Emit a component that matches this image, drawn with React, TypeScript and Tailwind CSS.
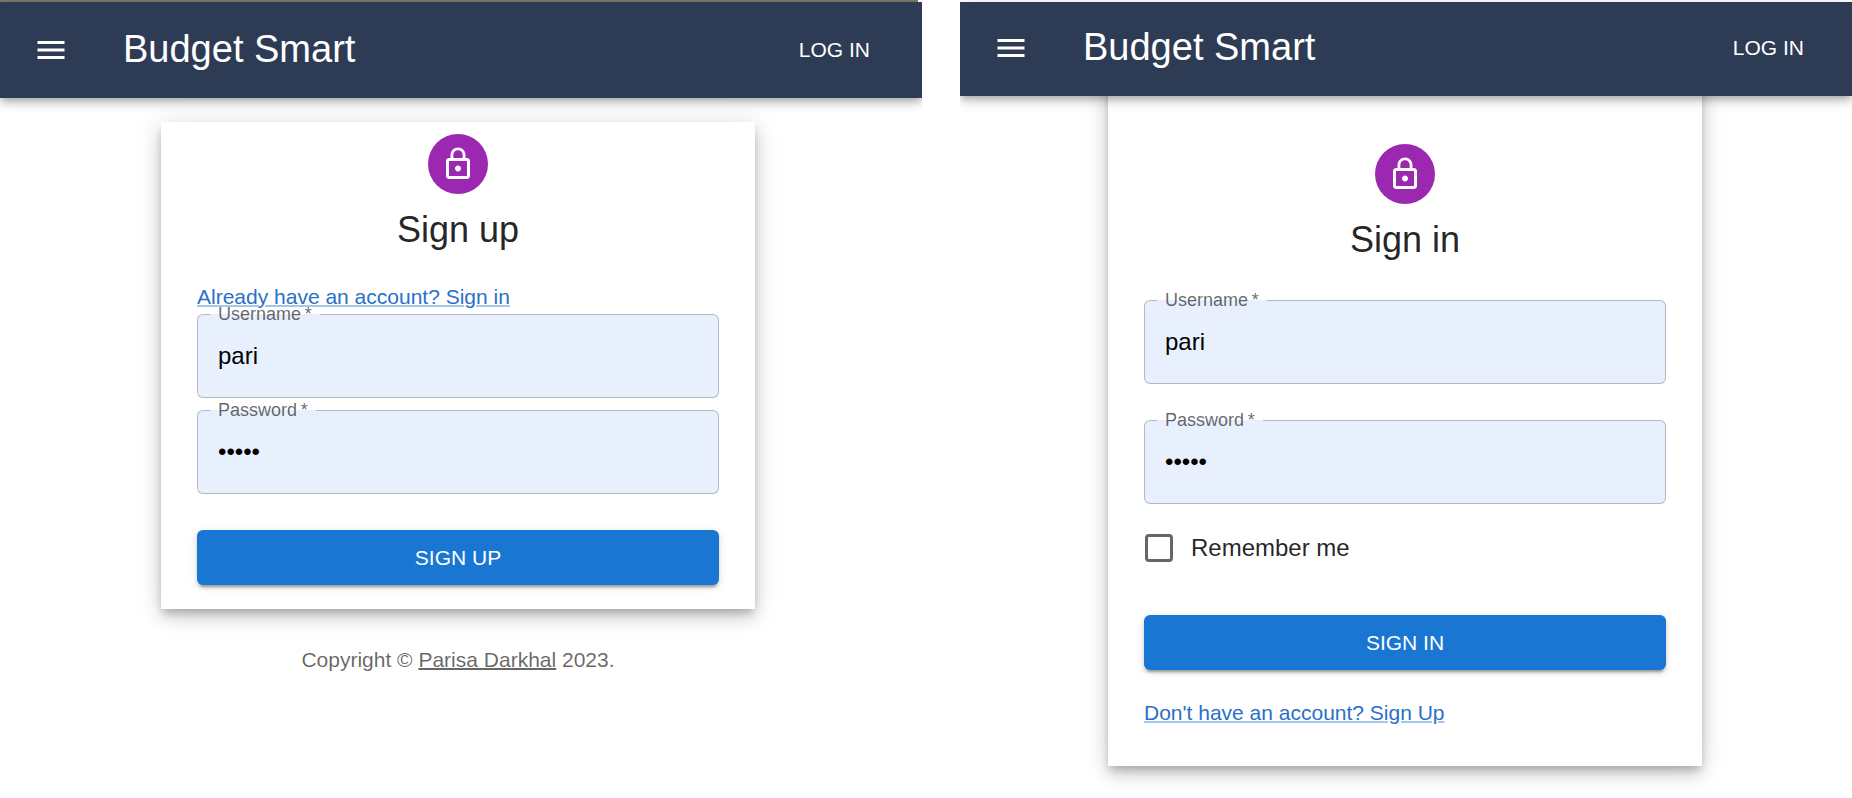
import React, { useId } from "react";

const cardShadow =
  "shadow-[0_5px_8px_-2px_rgba(0,0,0,0.2),0_9px_15px_0_rgba(0,0,0,0.14),0_2px_27px_0_rgba(0,0,0,0.12)]";

function MenuIcon() {
  return (
    <svg viewBox="0 0 24 24" className="size-9 fill-current" aria-hidden="true">
      <path d="M3 18h18v-2H3v2zm0-5h18v-2H3v2zm0-7v2h18V6H3z" />
    </svg>
  );
}

function LockBadge() {
  return (
    <div className="flex size-[60px] items-center justify-center rounded-full bg-[#9c27b0] text-white">
      <svg viewBox="0 0 24 24" className="size-9 fill-current" aria-hidden="true">
        <path d="M12 17c1.1 0 2-.9 2-2s-.9-2-2-2-2 .9-2 2 .9 2 2 2zm6-9h-1V6c0-2.76-2.24-5-5-5S7 3.24 7 6v2H6c-1.1 0-2 .9-2 2v10c0 1.1.9 2 2 2h12c1.1 0 2-.9 2-2V10c0-1.1-.9-2-2-2zM8.9 6c0-1.71 1.39-3.1 3.1-3.1s3.1 1.39 3.1 3.1v2H8.9V6zM18 20H6V10h12v10z" />
      </svg>
    </div>
  );
}

function AppHeader({ className }: { className: string }) {
  return (
    <header
      className={`relative z-10 flex items-center bg-[#2e3b55] pl-[33px] text-white shadow-[0_3px_6px_-2px_rgba(0,0,0,0.2),0_6px_8px_0_rgba(0,0,0,0.14),0_2px_15px_0_rgba(0,0,0,0.12)] ${className}`}
    >
      <button type="button" aria-label="Menu">
        <MenuIcon />
      </button>
      <div className="ml-[54px] grow pb-0.5 text-[38px] leading-12">Budget Smart</div>
      <button type="button" className="text-[21px] leading-9">
        LOG IN
      </button>
    </header>
  );
}

function Field({ label, type, value }: { label: string; type: string; value: string }) {
  const id = useId();
  return (
    <fieldset className="relative min-w-0 rounded-md border border-black/23 bg-[#e8f0fe]">
      <legend className="ml-3 px-2 text-lg leading-6 text-black/60">
        <label htmlFor={id} className="block">
          {label}&thinsp;*
        </label>
      </legend>
      <input
        id={id}
        type={type}
        defaultValue={value}
        className="mb-[11px] block h-[60px] w-full bg-transparent px-5 text-2xl text-black outline-none"
      />
    </fieldset>
  );
}

function SubmitButton({ children }: { children: React.ReactNode }) {
  return (
    <button
      type="submit"
      className="mt-9 block w-full rounded-md bg-[#1976d2] py-2 text-[21px] leading-[39px] text-white shadow-[0_5px_2px_-3px_rgba(0,0,0,0.2),0_3px_3px_0_rgba(0,0,0,0.14),0_2px_8px_0_rgba(0,0,0,0.12)]"
    >
      {children}
    </button>
  );
}

function TextLink({ children }: { children: React.ReactNode }) {
  return (
    <a
      href="#"
      className="text-[21px] leading-[30px] text-[#2a70c8] underline decoration-[#1976d2]/40 decoration-2"
    >
      {children}
    </a>
  );
}

function stay(e: React.FormEvent) {
  e.preventDefault();
}

function SignUp() {
  return (
    <section className="overflow-hidden">
      <div className="mr-1 h-0.5 bg-[#7c7c66]" />
      <AppHeader className="h-24 pr-[52px]" />
      <main className="pr-1.5 pt-6">
        <div
          className={`mx-auto flex max-w-[594px] flex-col items-center bg-white px-9 pb-6 pt-3 ${cardShadow}`}
        >
          <LockBadge />
          <h1 className="mt-3 text-4xl leading-12 text-black/87">Sign up</h1>
          <form onSubmit={stay} className="mt-7 w-full">
            <div className="-mb-2.5 flex">
              <TextLink>Already have an account? Sign in</TextLink>
            </div>
            <Field label="Username" type="text" value="pari" />
            <Field label="Password" type="password" value="12345" />
            <SubmitButton>SIGN UP</SubmitButton>
          </form>
        </div>
        <p className="mt-9 text-center text-[21px] leading-[30px] text-black/60">
          Copyright ©{" "}
          <a href="#" className="underline decoration-2">
            Parisa Darkhal
          </a>{" "}
          2023.
        </p>
      </main>
    </section>
  );
}

function SignIn() {
  return (
    <section className="overflow-hidden pt-0.5">
      <AppHeader className="h-[94px] pb-0.5 pr-12" />
      <main className="pr-0.5">
        <div
          className={`mx-auto -mt-6 flex max-w-[594px] flex-col items-center bg-white px-9 pb-[38px] pt-[72px] ${cardShadow}`}
        >
          <LockBadge />
          <h1 className="mt-3 text-4xl leading-12 text-black/87">Sign in</h1>
          <form onSubmit={stay} className="mt-6 w-full">
            <div className="flex flex-col gap-6">
              <Field label="Username" type="text" value="pari" />
              <Field label="Password" type="password" value="12345" />
            </div>
            <label className="mt-3 flex h-[63px] items-center gap-[18px] text-2xl text-black/87">
              <input
                type="checkbox"
                className="ml-px size-7 appearance-none rounded-sm border-3 border-black/60 bg-white checked:bg-[#1976d2]"
              />
              Remember me
            </label>
            <SubmitButton>SIGN IN</SubmitButton>
            <div className="mt-7 flex">
              <TextLink>Don't have an account? Sign Up</TextLink>
            </div>
          </form>
        </div>
      </main>
    </section>
  );
}

export default function App() {
  return (
    <div className="grid min-h-screen grid-cols-[922fr_892fr] gap-[38px] bg-white font-['Liberation_Sans',Arial,sans-serif]">
      <SignUp />
      <SignIn />
    </div>
  );
}
